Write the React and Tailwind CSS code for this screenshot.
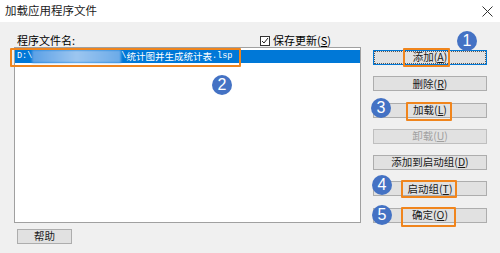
const orange = "absolute border-2 border-[#f0851d] rounded-[1px] pointer-events-none";
const dot =
  "absolute w-[20px] h-[20px] rounded-full bg-[#4472c4] text-white flex items-center justify-center text-[16px] font-['Liberation_Sans',sans-serif] leading-none";

function Btn({ children, disabled, focused, className = "" }) {
  return (
    <div
      className={`h-[15px] flex items-center justify-center text-[10.5px] leading-none border ${
        focused ? "border-[#0078d7]" : "border-[#adadad]"
      } bg-[#e1e1e1] ${disabled ? "text-[#a0a0a0] bg-[#cccccc] border-[#bfbfbf]" : "text-[#1a1a1a]"} ${className}`}
    >
      {focused ? (
        <div className="w-full h-full border border-dotted border-[#555] flex items-center justify-center">
          {children}
        </div>
      ) : (
        children
      )}
    </div>
  );
}

export default function App() {
  return (
    <div className="relative w-[500px] h-[253px] overflow-hidden bg-[#f0f0f0] font-['Noto_Sans_CJK_SC',sans-serif] text-black select-none">
      {/* title bar */}
      <div className="h-[22px] bg-white flex items-center justify-between pl-[5px] pr-[7px]">
        <span className="text-[11.5px] text-[#1a1a1a]">加载应用程序文件</span>
        <svg width="11" height="11" viewBox="0 0 11 11" stroke="#333" strokeWidth="1">
          <path d="M0.5 0.5l10 10M10.5 0.5l-10 10" />
        </svg>
      </div>

      <div className="flex pl-[14px]">
        {/* left column */}
        <div className="w-[347px] flex flex-col">
          <div className="h-[25px] flex items-end pb-[1px] justify-between">
            <span className="pl-[3px] text-[11px] leading-none">程序文件名:</span>
            <label className="flex items-center gap-[3px] mr-[30px] text-[11px] leading-none">
              <span className="w-[10px] h-[10px] border border-[#333] bg-white flex items-center justify-center">
                <svg width="8" height="8" viewBox="0 0 8 8">
                  <path d="M1 4l2 2 4-5" fill="none" stroke="#222" strokeWidth="1" />
                </svg>
              </span>
              <span>
                保存更新(<span className="underline">S</span>)
              </span>
            </label>
          </div>
          <div className="h-[176px] border border-[#a0a0a0] bg-white pt-[2px]">
            <div className="h-[13px] bg-[#0078d7] text-white leading-none flex items-center pl-[2px]">
              <span className="font-['Liberation_Mono',monospace] text-[8.5px]">D:\</span>
              <span className="w-[89px] h-full bg-gradient-to-r from-[#5aa0e6] via-[#9cc6f0] to-[#6aaae8] blur-[1px]" />
              <span className="font-['Liberation_Mono',monospace] text-[8.5px]">\</span>
              <span className="text-[9.5px]">统计图并生成统计表</span>
              <span className="font-['Liberation_Mono',monospace] text-[8.5px]">.lsp</span>
            </div>
          </div>
          <div className="mt-[6px] ml-[3px]">
            <Btn className="w-[55px]">帮助</Btn>
          </div>
        </div>

        {/* right column */}
        <div className="ml-[12px] w-[114px] flex flex-col gap-[11.3px] pt-[28px]">
          <Btn focused>
            添加(<span className="underline">A</span>)
          </Btn>
          <Btn>
            删除(<span className="underline">R</span>)
          </Btn>
          <Btn>
            加载(<span className="underline">L</span>)
          </Btn>
          <Btn disabled>
            卸载(<span className="underline">U</span>)
          </Btn>
          <Btn>
            添加到启动组(<span className="underline">D</span>)
          </Btn>
          <Btn>
            启动组(<span className="underline">T</span>)
          </Btn>
          <Btn>
            确定(<span className="underline">O</span>)
          </Btn>
        </div>
      </div>

      {/* annotations */}
      <div className={`${orange} left-[10px] top-[48px] w-[231px] h-[19px]`} />
      <div className={`${orange} left-[403px] top-[48px] w-[47px] h-[19px]`} />
      <div className={`${orange} left-[406px] top-[102px] w-[46px] h-[19px]`} />
      <div className={`${orange} left-[401px] top-[180px] w-[56px] h-[18px]`} />
      <div className={`${orange} left-[401px] top-[207px] w-[55px] h-[20px]`} />

      <div className={`${dot} left-[457px] top-[31px]`}>1</div>
      <div className={`${dot} left-[212px] top-[75px]`}>2</div>
      <div className={`${dot} left-[371px] top-[98px]`}>3</div>
      <div className={`${dot} left-[372px] top-[175px]`}>4</div>
      <div className={`${dot} left-[372px] top-[205px]`}>5</div>
    </div>
  );
}
